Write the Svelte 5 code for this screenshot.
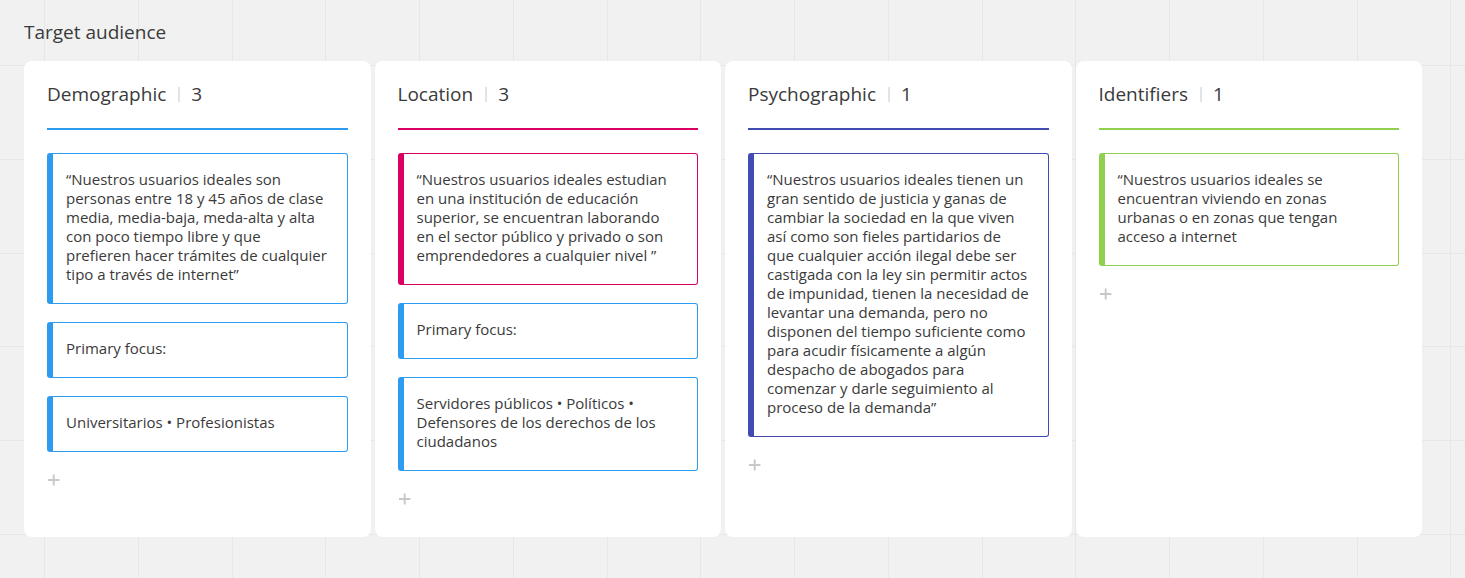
<script>
  const columns = [
    {
      title: 'Demographic',
      tone: 'blue',
      cards: [
        {
          tone: 'blue',
          text: '“Nuestros usuarios ideales son personas entre 18 y 45 años de clase media, media-baja, meda-alta y alta con poco tiempo libre y que prefieren hacer trámites de cualquier tipo a través de internet”',
        },
        { tone: 'blue', text: 'Primary focus:' },
        { tone: 'blue', text: 'Universitarios • Profesionistas' },
      ],
    },
    {
      title: 'Location',
      tone: 'pink',
      cards: [
        {
          tone: 'pink',
          text: '“Nuestros usuarios ideales estudian en una institución de educación superior, se encuentran laborando en el sector público y privado o son emprendedores a cualquier nivel ”',
        },
        { tone: 'blue', text: 'Primary focus:' },
        {
          tone: 'blue',
          text: 'Servidores públicos • Políticos • Defensores de los derechos de los ciudadanos',
        },
      ],
    },
    {
      title: 'Psychographic',
      tone: 'indigo',
      cards: [
        {
          tone: 'indigo',
          text: '“Nuestros usuarios ideales tienen un gran sentido de justicia y ganas de cambiar la sociedad en la que viven así como son fieles partidarios de que cualquier acción ilegal debe ser castigada con la ley sin permitir actos de impunidad, tienen la necesidad de levantar una demanda, pero no disponen del tiempo suficiente como para acudir físicamente a algún despacho de abogados para comenzar y darle seguimiento al proceso de la demanda”',
        },
      ],
    },
    {
      title: 'Identifiers',
      tone: 'green',
      cards: [
        {
          tone: 'green',
          text: '“Nuestros usuarios ideales se encuentran viviendo en zonas urbanas o en zonas que tengan acceso a internet',
        },
      ],
    },
  ];
</script>

<main class="canvas">
  <h1>Target audience</h1>
  <div class="board">
    {#each columns as column}
      <section class="column">
        <header class={column.tone}>
          <h2>{column.title}</h2>
          <span class="divider"></span>
          <span class="count">{column.cards.length}</span>
        </header>
        <ul>
          {#each column.cards as card}
            <li class={card.tone}>{card.text}</li>
          {/each}
        </ul>
        <button type="button" aria-label="Add card">
          <svg viewBox="0 0 13 12" width="13" height="12" aria-hidden="true">
            <path d="M6.7 .4v11.2M1 6h11.4" stroke="#c8c8c8" stroke-width="1.9" fill="none" />
          </svg>
        </button>
      </section>
    {/each}
  </div>
</main>

<style>
  :global(body) {
    margin: 0;
    background: #f1f1f1;
  }

  .canvas {
    --line: #e7e7e7;
    box-sizing: border-box;
    min-height: 100vh;
    padding: 20px 43px 41px 24px;
    background-color: #f1f1f1;
    background-image:
      linear-gradient(90deg, var(--line) 1px, transparent 1px 94px, var(--line) 94px 95px, transparent 95px 188px, var(--line) 188px 189px, transparent 189px 281px, var(--line) 281px 282px, transparent 282px),
      linear-gradient(var(--line) 1px, transparent 1px 94px, var(--line) 94px 95px, transparent 95px 188px, var(--line) 188px 189px, transparent 189px 281px, var(--line) 281px 282px, transparent 282px);
    background-size: 375px 375px;
    background-position: 44px 65px;
    color: #3a3a3a;
    font-family: "Open Sans", "Noto Sans", sans-serif;
  }

  h1,
  h2 {
    margin: 0;
    font-size: 19px;
    line-height: 24px;
    font-weight: 400;
  }

  .board {
    display: grid;
    grid-template-columns: repeat(4, minmax(0, 1fr));
    gap: 4px;
    margin-top: 17px;
  }

  .column {
    padding: 21px 23px 32px;
    border-radius: 8px;
    background: #fff;
  }

  header {
    display: flex;
    align-items: center;
    padding-bottom: 22px;
    border-bottom: 2px solid var(--tone);
  }

  .divider {
    width: 2px;
    height: 15px;
    margin: 0 11px 0 12px;
    background: #e4e4e4;
  }

  .count {
    font-size: 19px;
    line-height: 24px;
  }

  ul {
    display: flex;
    flex-direction: column;
    gap: 18px;
    margin: 23px 0 0;
    padding: 0;
    list-style: none;
  }

  li {
    padding: 16px 18px 19px 13px;
    border: 1px solid var(--tone);
    border-left-width: 6px;
    border-radius: 3px;
    font-size: 15px;
    line-height: 19px;
  }

  button {
    display: block;
    margin-top: 22px;
    padding: 0;
    border: 0;
    background: none;
    line-height: 0;
    cursor: pointer;
  }

  .blue {
    --tone: #2d9bf0;
  }

  .pink {
    --tone: #da0063;
  }

  .indigo {
    --tone: #414bb2;
  }

  .green {
    --tone: #8fd14f;
  }
</style>
